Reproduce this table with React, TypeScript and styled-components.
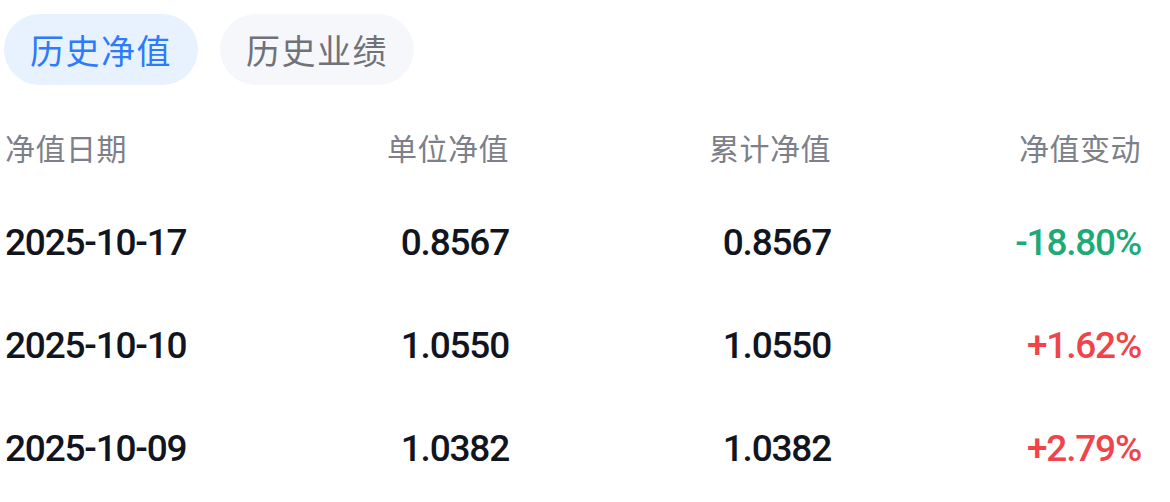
import React, { useState } from "react";
import styled, { createGlobalStyle } from "styled-components";

const GlobalStyle = createGlobalStyle`
  html, body {
    margin: 0;
    padding: 0;
    background: #ffffff;
  }
  body {
    font-family: Roboto, "Noto Sans CJK SC", sans-serif;
  }
`;

const Page = styled.div`
  width: 1170px;
  height: 502px;
  box-sizing: border-box;
  padding: 14px 29px 0 5px;
  overflow: hidden;
`;

const Tabs = styled.div`
  display: flex;
  gap: 22px;
  margin-left: -1px;
`;

const Tab = styled.button<{ $active?: boolean }>`
  width: 194px;
  height: 71px;
  border: none;
  border-radius: 36px;
  padding: 0;
  font-family: "Noto Sans CJK SC", sans-serif;
  font-size: 34px;
  font-weight: 400;
  letter-spacing: 1.5px;
  cursor: pointer;
  background: ${(p) => (p.$active ? "#e8f1fe" : "#f5f7fa")};
  color: ${(p) => (p.$active ? "#2b7bfa" : "#717179")};
`;

const Table = styled.div`
  margin-top: 32px;
`;

const Row = styled.div<{ $head?: boolean }>`
  display: grid;
  grid-template-columns: 190px 314px 322px 310px;
  align-items: center;
  height: ${(p) => (p.$head ? "60px" : "103px")};
  margin-bottom: ${(p) => (p.$head ? "14px" : "0")};
`;

const HeadCell = styled.div<{ $left?: boolean }>`
  font-family: "Noto Sans CJK SC", sans-serif;
  font-size: 30px;
  color: #7d8089;
  text-align: ${(p) => (p.$left ? "left" : "right")};
  letter-spacing: 0.5px;
`;

const Cell = styled.div<{ $left?: boolean; $tone?: "up" | "down" }>`
  font-family: Roboto, sans-serif;
  font-size: 37px;
  font-weight: 500;
  letter-spacing: -1.2px;
  text-align: ${(p) => (p.$left ? "left" : "right")};
  color: ${(p) =>
    p.$tone === "up" ? "#f0434a" : p.$tone === "down" ? "#1daa78" : "#111520"};
`;

const rows = [
  { date: "2025-10-17", unit: "0.8567", total: "0.8567", change: "-18.80%" },
  { date: "2025-10-10", unit: "1.0550", total: "1.0550", change: "+1.62%" },
  { date: "2025-10-09", unit: "1.0382", total: "1.0382", change: "+2.79%" },
];

const App: React.FC = () => {
  const [tab, setTab] = useState(0);
  return (
    <>
      <GlobalStyle />
      <Page>
        <Tabs>
          <Tab $active={tab === 0} onClick={() => setTab(0)}>
            历史净值
          </Tab>
          <Tab $active={tab === 1} onClick={() => setTab(1)}>
            历史业绩
          </Tab>
        </Tabs>
        <Table>
          <Row $head>
            <HeadCell $left>净值日期</HeadCell>
            <HeadCell>单位净值</HeadCell>
            <HeadCell>累计净值</HeadCell>
            <HeadCell>净值变动</HeadCell>
          </Row>
          {rows.map((r) => (
            <Row key={r.date}>
              <Cell $left>{r.date}</Cell>
              <Cell>{r.unit}</Cell>
              <Cell>{r.total}</Cell>
              <Cell $tone={r.change.startsWith("-") ? "down" : "up"}>
                {r.change}
              </Cell>
            </Row>
          ))}
        </Table>
      </Page>
    </>
  );
};

export default App;
